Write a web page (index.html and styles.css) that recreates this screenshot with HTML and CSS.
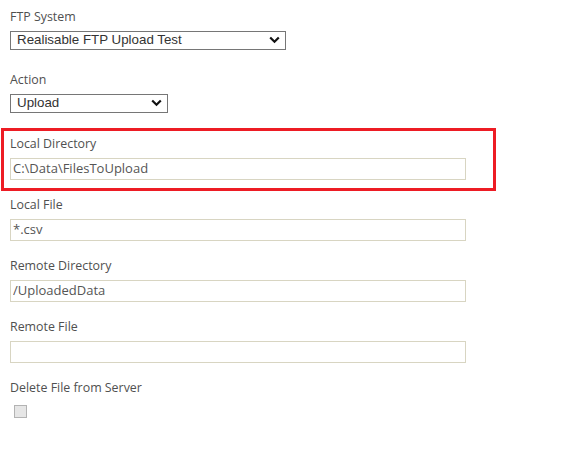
FILE: index.html
```html
<!DOCTYPE html>
<html>
<head>
<meta charset="utf-8">
<link rel="stylesheet" href="styles.css">
</head>
<body>
<form class="form">
  <div class="field field-select">
    <label class="label">FTP System</label>
    <span class="select-wrap select-wide">
      <select class="select"><option>Realisable FTP Upload Test</option></select>
      <svg class="chevron" width="11" height="8" viewBox="0 0 11 8"><path d="M1.2 1.5 L5.5 5.8 L9.8 1.5" fill="none" stroke="#111111" stroke-width="2.2"/></svg>
    </span>
  </div>
  <div class="field field-select">
    <label class="label">Action</label>
    <span class="select-wrap select-narrow">
      <select class="select"><option>Upload</option></select>
      <svg class="chevron" width="11" height="8" viewBox="0 0 11 8"><path d="M1.2 1.5 L5.5 5.8 L9.8 1.5" fill="none" stroke="#111111" stroke-width="2.2"/></svg>
    </span>
  </div>
  <div class="highlight">
    <div class="field">
      <label class="label">Local Directory</label>
      <input class="text" type="text" value="C:\Data\FilesToUpload">
    </div>
  </div>
  <div class="field">
    <label class="label">Local File</label>
    <input class="text" type="text" value="*.csv">
  </div>
  <div class="field">
    <label class="label">Remote Directory</label>
    <input class="text" type="text" value="/UploadedData">
  </div>
  <div class="field">
    <label class="label">Remote File</label>
    <input class="text" type="text" value="">
  </div>
  <div class="field">
    <label class="label">Delete File from Server</label>
    <span class="checkbox"></span>
  </div>
</form>
</body>
</html>
```
FILE: styles.css
```css
html, body {
  margin: 0;
  padding: 0;
  background: #ffffff;
}
body {
  font-family: "Open Sans", "DejaVu Sans", sans-serif;
  color: #555555;
}
.form {
  display: flex;
  flex-direction: column;
  align-items: flex-start;
  padding: 8px 0 0 1px;
}
.field {
  display: flex;
  flex-direction: column;
  align-items: flex-start;
  padding-left: 9px;
  margin-bottom: 16px;
}
.field-select {
  margin-bottom: 21px;
}
.field-select:nth-child(2) {
  margin-bottom: 15px;
}
.label {
  display: block;
  font-size: 12.4px;
  line-height: 17px;
  color: #505050;
  margin-bottom: 6px;
}
.select-wrap {
  position: relative;
  display: block;
  height: 19px;
}
.select-wide { width: 276px; }
.select-narrow { width: 158px; }
.select {
  -webkit-appearance: none;
  appearance: none;
  display: block;
  box-sizing: border-box;
  width: 100%;
  height: 19px;
  margin: 0;
  border: 1px solid #767676;
  border-radius: 0;
  background: #ffffff;
  font-family: "Liberation Sans", Arial, sans-serif;
  font-size: 13.333px;
  color: #333333;
  padding: 0 0 1px 6px;
  line-height: 16px;
}
.chevron {
  position: absolute;
  right: 6px;
  top: 5px;
  pointer-events: none;
}
.highlight {
  box-sizing: border-box;
  width: 495px;
  border: 3px solid #ed1c24;
  padding: 4px 0 0 0;
  margin-bottom: 5px;
}
.highlight .field {
  padding-left: 6px;
  margin-bottom: 8px;
}
.text {
  box-sizing: border-box;
  width: 456px;
  height: 22px;
  margin: 0;
  border: 1px solid #d8d5c2;
  border-radius: 0;
  padding: 0 2px 3px 2px;
  font-family: "Open Sans", "DejaVu Sans", sans-serif;
  font-size: 13px;
  color: #555555;
  background: #ffffff;
  outline: none;
}
.checkbox {
  display: block;
  box-sizing: border-box;
  width: 13px;
  height: 13px;
  margin: 3px 0 0 4px;
  border: 1px solid #b3b3b3;
  background: #e6e6e6;
}
```
